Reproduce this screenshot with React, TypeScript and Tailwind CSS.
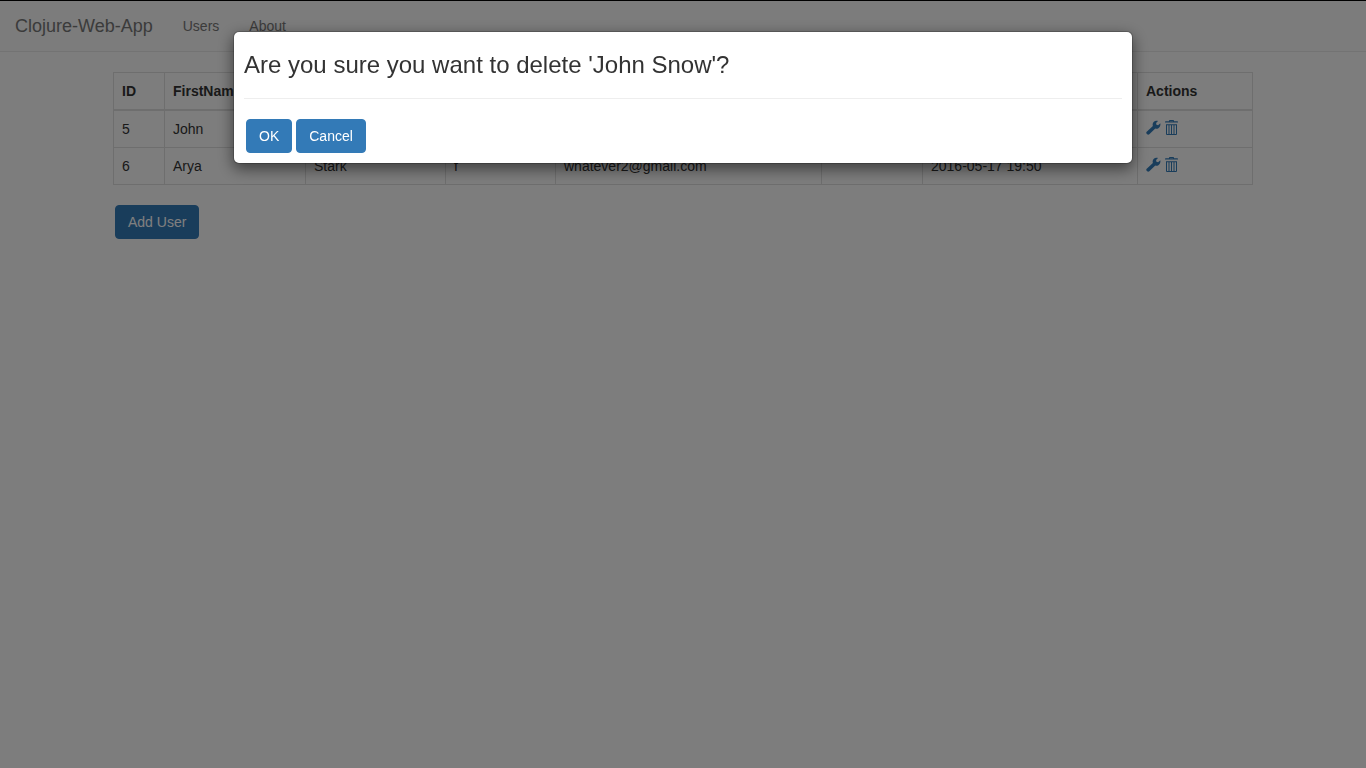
import React from "react";

type User = {
  id: number;
  firstName: string;
  lastName: string;
  gender: string;
  email: string;
  age: string;
  created: string;
};

const users: User[] = [
  { id: 5, firstName: "John", lastName: "Snow", gender: "m", email: "whatever1@gmail.com", age: "", created: "2016-05-17 19:49" },
  { id: 6, firstName: "Arya", lastName: "Stark", gender: "f", email: "whatever2@gmail.com", age: "", created: "2016-05-17 19:50" },
];

const columns = [
  { label: "ID", width: "w-[51px]" },
  { label: "FirstName", width: "w-[141px]" },
  { label: "LastName", width: "w-[140px]" },
  { label: "Gender", width: "w-[110px]" },
  { label: "Email", width: "w-[266px]" },
  { label: "Age", width: "w-[101px]" },
  { label: "Created", width: "w-[215px]" },
  { label: "Actions", width: "" },
];

const buttonClass =
  "rounded-sm border border-[#337ab7] bg-[#337ab7] px-3 py-1.5 text-sm leading-5 text-white";
const cellClass = "border border-[#ddd] p-2";

function WrenchIcon() {
  return (
    <svg width="15" height="15" viewBox="0 0 15 15" fill="currentColor" aria-hidden="true">
      <path d="M12 1 10.1 3.1 10.4 4.8 12.1 5.2 14.3 3.3C14.8 5.3 14 7.2 12.4 8.2 11.3 8.8 10.3 8.8 9.3 8.5L3.3 14.2C2.7 14.8 1.8 14.8 1.2 14.3L.7 13.8C.1 13.2.1 12.3.7 11.7L6.9 6.1C6.4 4.7 6.6 3.2 7.6 2.1 8.8.8 10.4.4 12 1Z" />
    </svg>
  );
}

function TrashIcon() {
  return (
    <svg width="13" height="15" viewBox="0 0 13 15" fill="currentColor" aria-hidden="true">
      <path
        fillRule="evenodd"
        d="M4 1.3V.8Q4 0 4.8 0H8.2Q9 0 9 .8V1.3H12.3Q13 1.3 13 2V2.5H0V2Q0 1.3.7 1.3ZM5 1V1.3H8V1ZM1 4.2H12V14Q12 15 11 15H2Q1 15 1 14ZM2 5.2V14H3.5V5.2ZM4.5 5.2V14H6V5.2ZM7 5.2V14H8.5V5.2ZM9.5 5.2V14H11V5.2Z"
      />
    </svg>
  );
}

function Navbar() {
  return (
    <nav className="flex h-[51px] items-center border-b border-[#e7e7e7] bg-[#f8f8f8] text-[#777]">
      <a href="#home" className="px-[15px] text-lg leading-5">
        Clojure-Web-App
      </a>
      <a href="#users" className="px-[15px] text-sm leading-5">
        Users
      </a>
      <a href="#about" className="px-[15px] text-sm leading-5">
        About
      </a>
    </nav>
  );
}

function UserTable() {
  return (
    <table className="w-full table-fixed border-collapse border border-[#ddd] text-left text-sm leading-5">
      <thead>
        <tr>
          {columns.map((column) => (
            <th key={column.label} scope="col" className={`border border-b-2 border-[#ddd] p-2 font-bold ${column.width}`}>
              {column.label}
            </th>
          ))}
        </tr>
      </thead>
      <tbody>
        {users.map((user) => (
          <tr key={user.id}>
            <td className={cellClass}>{user.id}</td>
            <td className={cellClass}>{user.firstName}</td>
            <td className={cellClass}>{user.lastName}</td>
            <td className={cellClass}>{user.gender}</td>
            <td className={cellClass}>{user.email}</td>
            <td className={cellClass}>{user.age}</td>
            <td className={cellClass}>{user.created}</td>
            <td className={cellClass}>
              <div className="flex h-5 items-start gap-1 pt-px text-[#337ab7]">
                <a href="#edit" aria-label="Edit user">
                  <WrenchIcon />
                </a>
                <a href="#delete" aria-label="Delete user">
                  <TrashIcon />
                </a>
              </div>
            </td>
          </tr>
        ))}
      </tbody>
    </table>
  );
}

function DeleteDialog() {
  return (
    <div className="fixed inset-0 bg-black/50 px-4 pt-[31px]">
      <div
        role="dialog"
        aria-modal="true"
        aria-labelledby="dialog-title"
        className="mx-auto max-w-[900px] rounded-md border border-black/20 bg-white bg-clip-padding p-2.5 shadow-[0_5px_15px_rgba(0,0,0,0.5)]"
      >
        <h3 id="dialog-title" className="mt-2.5 text-2xl leading-[26px] font-medium">
          Are you sure you want to delete 'John Snow'?
        </h3>
        <hr className="my-5 border-[#eee]" />
        <div className="flex gap-1 px-0.5">
          <button type="button" className={buttonClass}>
            OK
          </button>
          <button type="button" className={buttonClass}>
            Cancel
          </button>
        </div>
      </div>
    </div>
  );
}

export default function App() {
  return (
    <div className="min-h-screen border-t border-black bg-[#fafafa] font-['Liberation_Sans',Arial,sans-serif] text-[#333]">
      <Navbar />
      <main className="mx-auto max-w-[1170px] px-[15px] pt-5">
        <UserTable />
        <div className="px-0.5 pt-5">
          <button type="button" className={buttonClass}>
            Add User
          </button>
        </div>
      </main>
      <DeleteDialog />
    </div>
  );
}
